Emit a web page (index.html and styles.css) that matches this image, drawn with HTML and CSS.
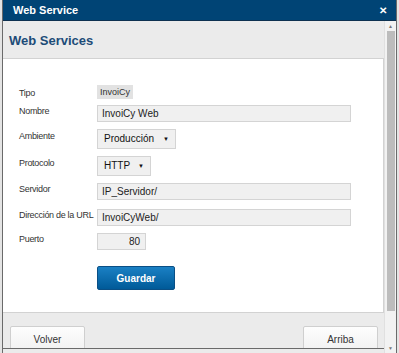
FILE: index.html
```html
<!DOCTYPE html>
<html lang="es">
<head>
<meta charset="utf-8">
<title>Web Service</title>
<link rel="stylesheet" href="styles.css">
</head>
<body>
<div class="dialog">
	<div class="titlebar">
		<span class="title">Web Service</span>
		<span class="close">&#x2715;</span>
	</div>
	<div class="frame">
		<div class="content">
			<div class="header">Web Services</div>
			<div class="panel">
				<div class="form">
					<label class="lbl lbl-tipo">Tipo</label>
					<div class="badge">InvoiCy</div>
					<label class="lbl">Nombre</label>
					<div class="input wide">InvoiCy Web</div>
					<label class="lbl lbl-sel">Ambiente</label>
					<div class="select amb">Producción<span class="arrow">&#9660;</span></div>
					<label class="lbl lbl-sel">Protocolo</label>
					<div class="select proto">HTTP<span class="arrow">&#9660;</span></div>
					<label class="lbl">Servidor</label>
					<div class="input wide">IP_Servidor/</div>
					<label class="lbl gap-top">Dirección de la URL</label>
					<div class="input wide gap-top">InvoiCyWeb/</div>
					<label class="lbl">Puerto</label>
					<div class="input port">80</div>
					<span></span>
					<div><button class="save">Guardar</button></div>
				</div>
			</div>
			<div class="footer">
				<button class="btn">Volver</button>
				<button class="btn">Arriba</button>
			</div>
		</div>
		<div class="scrollbar">
			<span class="sarrow up">&#9650;</span>
			<div class="thumb"></div>
			<span class="sarrow down">&#9660;</span>
		</div>
	</div>
</div>
</body>
</html>
```
FILE: styles.css
```css
html, body {
	margin: 0;
	padding: 0;
	overflow: hidden;
}

body {
	width: 399px;
	height: 353px;
	background: #e4e4e4;
	font-family: "Liberation Sans", Arial, sans-serif;
	color: #333;
}

.dialog {
	margin-left: 2px;
	width: 395px;
	height: 353px;
	display: flex;
	flex-direction: column;
	background: #fff;
	border-left: 1px solid #6a6a6a;
	border-right: 1px solid #6a6a6a;
	box-sizing: border-box;
}

.titlebar {
	height: 20px;
	flex: none;
	background: #004475;
	color: #fff;
	display: flex;
	align-items: center;
	justify-content: space-between;
	padding: 0 9px 0 10px;
	border-bottom: 1px solid #0d3150;
}

.title {
	font-weight: bold;
	font-size: 11px;
}

.close {
	font-size: 10px;
	font-weight: bold;
}

.frame {
	flex: 1;
	display: flex;
	min-height: 0;
}

.content {
	flex: 1;
	background: #ebebeb;
	display: flex;
	flex-direction: column;
}

.header {
	height: 37px;
	padding-left: 6px;
	display: flex;
	align-items: center;
	font-size: 13px;
	font-weight: bold;
	color: #1d4c78;
	box-sizing: border-box;
	padding-top: 1px;
}

.panel {
	background: #fff;
	border: 1px solid #d2d2d2;
	border-left: none;
	height: 255px;
	box-sizing: border-box;
	padding: 26px 0 0 16px;
}

.form {
	display: grid;
	grid-template-columns: 78px 254px;
	row-gap: 7px;
	align-items: start;
}

.lbl {
	font-size: 9px;
	color: #333;
	padding-top: 1px;
	white-space: nowrap;
	letter-spacing: -0.3px;
}

.lbl-tipo {
	padding-top: 3px;
}

.lbl-sel {
	padding-top: 2px;
}

.gap-top {
	margin-top: 2px;
}

.badge {
	width: fit-content;
	background: #e2e2e2;
	font-size: 9px;
	padding: 2px 3px;
	line-height: 10px;
	margin-bottom: -1px;
}

.input {
	height: 17px;
	box-sizing: border-box;
	background: #f0f0f0;
	border: 1px solid #d4d4d4;
	font-size: 10px;
	line-height: 15px;
	padding: 0 4px;
	color: #222;
}

.wide {
	width: 254px;
}

.port {
	width: 49px;
	text-align: right;
	padding-right: 5px;
}

.select {
	height: 20px;
	box-sizing: border-box;
	background: #f0f0f0;
	border: 1px solid #d4d4d4;
	font-size: 10px;
	line-height: 18px;
	padding: 0 6px;
	color: #111;
	display: flex;
	justify-content: space-between;
}

.amb {
	width: 79px;
}

.proto {
	width: 54px;
}

.arrow {
	font-size: 6px;
}

.save {
	margin-top: 9px;
	width: 78px;
	height: 24px;
	border: 1px solid #0a4f85;
	border-radius: 2px;
	background: linear-gradient(#1a80c4, #005a98);
	color: #fff;
	font-family: "Liberation Sans", Arial, sans-serif;
	font-weight: bold;
	font-size: 10px;
	padding: 0;
}

.footer {
	flex: 1;
	display: flex;
	justify-content: space-between;
	align-items: flex-start;
	padding: 13px 6px 0 7px;
	border-bottom: 1px solid #6a6a6a;
	margin-bottom: 4px;
	overflow: hidden;
}

.btn {
	width: 75px;
	height: 26px;
	background: linear-gradient(#fdfdfd, #f1f1f1);
	border: 1px solid #cfcfcf;
	border-radius: 2px;
	font-family: "Liberation Sans", Arial, sans-serif;
	font-size: 10px;
	color: #333;
	padding: 0;
}

.scrollbar {
	width: 11px;
	flex: none;
	background: #f2f2f2;
	display: flex;
	flex-direction: column;
	align-items: center;
	border-left: 1px solid #e0e0e0;
}

.sarrow {
	font-size: 5px;
	color: #777;
	height: 10px;
	line-height: 10px;
}

.thumb {
	width: 8px;
	height: 280px;
	background: #bcbcbc;
	margin-bottom: auto;
}
```
